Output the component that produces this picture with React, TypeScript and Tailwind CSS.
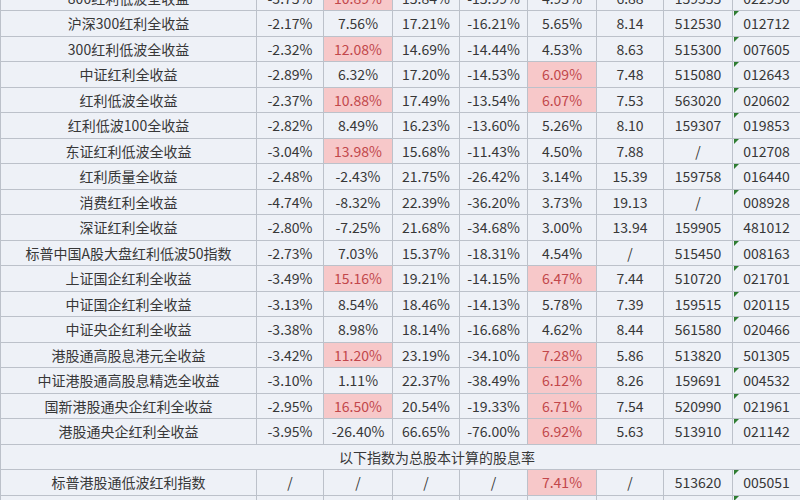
import React from "react";

type Row = {
  name: string;
  v: string[];
  red?: number[];
  tri?: boolean;
};

const rows: Row[] = [
  { name: "800红利低波全收益", v: ["-3.75%", "10.89%", "15.84%", "-15.99%", "4.95%", "6.88", "159355", "022950"], red: [1], tri: true },
  { name: "沪深300红利全收益", v: ["-2.17%", "7.56%", "17.21%", "-16.21%", "5.65%", "8.14", "512530", "012712"], tri: true },
  { name: "300红利低波全收益", v: ["-2.32%", "12.08%", "14.69%", "-14.44%", "4.53%", "8.63", "515300", "007605"], red: [1], tri: true },
  { name: "中证红利全收益", v: ["-2.89%", "6.32%", "17.20%", "-14.53%", "6.09%", "7.48", "515080", "012643"], red: [4], tri: true },
  { name: "红利低波全收益", v: ["-2.37%", "10.88%", "17.49%", "-13.54%", "6.07%", "7.53", "563020", "020602"], red: [1, 4], tri: true },
  { name: "红利低波100全收益", v: ["-2.82%", "8.49%", "16.23%", "-13.60%", "5.26%", "8.10", "159307", "019853"], tri: true },
  { name: "东证红利低波全收益", v: ["-3.04%", "13.98%", "15.68%", "-11.43%", "4.50%", "7.88", "/", "012708"], red: [1], tri: true },
  { name: "红利质量全收益", v: ["-2.48%", "-2.43%", "21.75%", "-26.42%", "3.14%", "15.39", "159758", "016440"], tri: true },
  { name: "消费红利全收益", v: ["-4.74%", "-8.32%", "22.39%", "-36.20%", "3.73%", "19.13", "/", "008928"], tri: true },
  { name: "深证红利全收益", v: ["-2.80%", "-7.25%", "21.68%", "-34.68%", "3.00%", "13.94", "159905", "481012"] },
  { name: "标普中国A股大盘红利低波50指数", v: ["-2.73%", "7.03%", "15.37%", "-18.31%", "4.54%", "/", "515450", "008163"], tri: true },
  { name: "上证国企红利全收益", v: ["-3.49%", "15.16%", "19.21%", "-14.15%", "6.47%", "7.44", "510720", "021701"], red: [1, 4], tri: true },
  { name: "中证国企红利全收益", v: ["-3.13%", "8.54%", "18.46%", "-14.13%", "5.78%", "7.39", "159515", "020115"], tri: true },
  { name: "中证央企红利全收益", v: ["-3.38%", "8.98%", "18.14%", "-16.68%", "4.62%", "8.44", "561580", "020466"], tri: true },
  { name: "港股通高股息港元全收益", v: ["-3.42%", "11.20%", "23.19%", "-34.10%", "7.28%", "5.86", "513820", "501305"], red: [1, 4] },
  { name: "中证港股通高股息精选全收益", v: ["-3.10%", "1.11%", "22.37%", "-38.49%", "6.12%", "8.26", "159691", "004532"], red: [4], tri: true },
  { name: "国新港股通央企红利全收益", v: ["-2.95%", "16.50%", "20.54%", "-19.33%", "6.71%", "7.54", "520990", "021961"], red: [1, 4], tri: true },
  { name: "港股通央企红利全收益", v: ["-3.95%", "-26.40%", "66.65%", "-76.00%", "6.92%", "5.63", "513910", "021142"], red: [4], tri: true },
];

const tail: Row[] = [
  { name: "标普港股通低波红利指数", v: ["/", "/", "/", "/", "7.41%", "/", "513620", "005051"], red: [4], tri: true },
  { name: "恒生港股通高股息率指数", v: ["/", "/", "/", "/", "7.10%", "/", "159302", "022458"], tri: true },
];

const gridCols = "grid grid-cols-[256px_67px_69px_67px_68px_69px_67px_69px_68px]";

function DataRow({ r }: { r: Row }) {
  return (
    <div className={`${gridCols} h-[25.5px] border-b border-l border-[#bcc1ca]`}>
      <div className="flex items-center justify-center border-r border-[#bcc1ca] whitespace-nowrap">
        {r.name}
      </div>
      {r.v.map((val, i) => {
        const isRed = r.red?.includes(i);
        return (
          <div
            key={i}
            className={
              isRed
                ? "relative flex items-center justify-center border-r border-[#bcc1ca] bg-[#f7c8c9] text-[#c2474b]"
                : "relative flex items-center justify-center border-r border-[#bcc1ca]"
            }
          >
            {i === 7 && r.tri ? (
              <span className="absolute left-px top-0 h-0 w-0 border-t-[5px] border-r-[5px] border-t-[#2f7d32] border-r-transparent" />
            ) : null}
            {val}
          </div>
        );
      })}
    </div>
  );
}

export default function App() {
  return (
    <div
      className="h-[500px] w-[800px] overflow-hidden bg-[#eef1f7] text-[14px] leading-none text-[#373737]"
      style={{ fontFamily: '"Noto Sans CJK SC", "Noto Sans", sans-serif' }}
    >
      <div className="mt-[-14.5px]">
        {rows.map((r, i) => (
          <DataRow key={i} r={r} />
        ))}
        <div className="flex h-[25.5px] items-center border-b border-l border-[#bcc1ca] pl-[338px] whitespace-nowrap">
          以下指数为总股本计算的股息率
        </div>
        {tail.map((r, i) => (
          <DataRow key={i} r={r} />
        ))}
      </div>
    </div>
  );
}
